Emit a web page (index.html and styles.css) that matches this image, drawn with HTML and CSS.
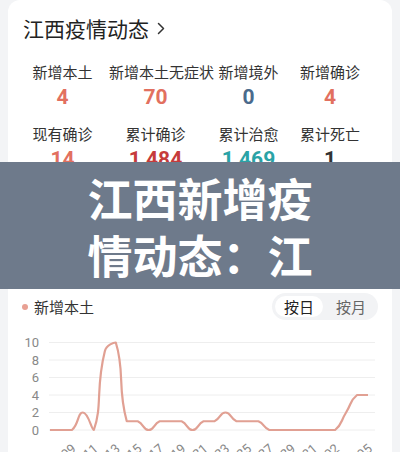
FILE: index.html
```html
<!DOCTYPE html>
<html lang="zh-CN">
<head>
    <meta charset="UTF-8">
    <meta name="viewport" content="width=device-width, initial-scale=1.0">
    <title>江西疫情动态</title>
    <link rel="stylesheet" href="styles.css">
</head>
<body>
    <div class="page">
        <div class="card">
            <div class="card-title">
                江西疫情动态
                <svg class="chevron" width="8" height="13" viewBox="0 0 8 13">
                    <path d="M1.5 1.5 L6.5 6.5 L1.5 11.5" fill="none" stroke="#333" stroke-width="1.5" stroke-linecap="round" stroke-linejoin="round"/>
                </svg>
            </div>

            <div class="stats">
                <div class="stat">
                    <div class="stat-label">新增本土</div>
                    <div class="stat-num coral">4</div>
                </div>
                <div class="stat">
                    <div class="stat-label">新增本土无症状</div>
                    <div class="stat-num coral">70</div>
                </div>
                <div class="stat">
                    <div class="stat-label">新增境外</div>
                    <div class="stat-num slate">0</div>
                </div>
                <div class="stat">
                    <div class="stat-label">新增确诊</div>
                    <div class="stat-num coral">4</div>
                </div>
                <div class="stat">
                    <div class="stat-label">现有确诊</div>
                    <div class="stat-num coral">14</div>
                </div>
                <div class="stat">
                    <div class="stat-label">累计确诊</div>
                    <div class="stat-num red">1,484</div>
                </div>
                <div class="stat">
                    <div class="stat-label">累计治愈</div>
                    <div class="stat-num teal">1,469</div>
                </div>
                <div class="stat">
                    <div class="stat-label">累计死亡</div>
                    <div class="stat-num dark">1</div>
                </div>
            </div>

            <div class="chart-head">
                <div class="legend"><span class="legend-dot"></span>新增本土</div>
                <div class="toggle">
                    <span class="toggle-btn active">按日</span>
                    <span class="toggle-btn">按月</span>
                </div>
            </div>

            <svg class="chart" id="chart" width="384" height="130" viewBox="0 0 384 130"></svg>
        </div>
    </div>

    <div class="banner">
        <div class="banner-text">江西新增疫情动态：江</div>
    </div>

    <script>
        // daily new local cases, starting 12.07
        const data = [0, 0, 0, 2, 0, 9, 10, 1, 1, 0, 1, 1, 1, 0, 1,
                      1, 2, 1, 1, 1, 0, 0, 0, 0, 0, 0, 0, 2, 4, 4];
        const svg = document.getElementById('chart');
        const ns = 'http://www.w3.org/2000/svg';

        const x0 = 42, step = 318 / 29;
        const yZero = 100, unit = 8.75;
        const px = i => x0 + i * step;
        const py = v => yZero - v * unit;

        function add(tag, attrs, text) {
            const el = document.createElementNS(ns, tag);
            for (const k in attrs) el.setAttribute(k, attrs[k]);
            if (text !== undefined) el.textContent = text;
            svg.appendChild(el);
            return el;
        }

        // grid + y labels
        for (let v = 0; v <= 10; v += 2) {
            add('line', { x1: 41, x2: 367, y1: py(v), y2: py(v), stroke: '#eeeeee', 'stroke-width': 1 });
            add('text', { x: 31, y: py(v) + 4.5, 'text-anchor': 'end', class: 'axis' }, v);
        }

        // x labels
        function dateLabel(i) {
            const day = 7 + i;
            if (day <= 31) return '12.' + String(day).padStart(2, '0');
            return '01.' + String(day - 31).padStart(2, '0');
        }
        const ticks = [];
        for (let i = 2; i <= 26; i += 2) ticks.push(i);
        ticks.push(29);
        ticks.forEach(i => {
            add('text', {
                transform: `translate(${px(i) + 5}, 120) rotate(-40)`,
                'text-anchor': 'end',
                class: 'axis'
            }, dateLabel(i));
        });

        // smooth line, control points clamped between neighbours
        const pts = data.map((v, i) => [px(i), py(v)]);
        const smooth = 0.5;
        const clamp = (v, a, b) => Math.min(Math.max(v, Math.min(a, b)), Math.max(a, b));
        const cpIn = [], cpOut = [];
        pts.forEach((p, i) => {
            const prev = pts[i - 1] || p;
            const next = pts[i + 1] || p;
            const vx = next[0] - prev[0], vy = next[1] - prev[1];
            const l0 = Math.hypot(p[0] - prev[0], p[1] - prev[1]);
            const l1 = Math.hypot(next[0] - p[0], next[1] - p[1]);
            const r = l0 + l1 ? l1 / (l0 + l1) : 0;
            cpOut[i] = [clamp(p[0] + vx * smooth * r, p[0], next[0]), clamp(p[1] + vy * smooth * r, p[1], next[1])];
            cpIn[i] = [clamp(p[0] - vx * smooth * (1 - r), p[0], prev[0]), clamp(p[1] - vy * smooth * (1 - r), p[1], prev[1])];
        });

        let path = `M${pts[0][0]} ${pts[0][1]}`;
        for (let i = 0; i < pts.length - 1; i++) {
            path += ` C${cpOut[i][0]} ${cpOut[i][1]} ${cpIn[i + 1][0]} ${cpIn[i + 1][1]} ${pts[i + 1][0]} ${pts[i + 1][1]}`;
        }
        add('path', { d: path, fill: 'none', stroke: '#e1a093', 'stroke-width': 2.2, 'stroke-linejoin': 'round' });
    </script>
</body>
</html>
```

FILE: styles.css
```css
body {
    margin: 0;
    background-color: #f3f4f6;
    font-family: "Noto Sans CJK SC", "Noto Sans", sans-serif;
    color: #333;
}

.page {
    padding: 0 8px;
}

.card {
    background-color: #fff;
    border-radius: 12px;
    padding: 14px 0 20px;
}

.card-title {
    display: flex;
    align-items: center;
    padding-left: 15px;
    font-size: 21px;
    line-height: 28px;
    color: #222;
}

.chevron {
    margin-left: 8px;
    margin-top: 1px;
}

.stats {
    display: grid;
    grid-template-columns: 93px 93px 93px 70px;
    row-gap: 14px;
    margin-top: 20px;
    padding-left: 8px;
}

.stat {
    text-align: center;
    white-space: nowrap;
}

.stat-label {
    font-size: 15px;
    line-height: 20px;
    color: #333;
}

.stat-num {
    margin-top: 2px;
    font-family: Roboto, "Noto Sans", sans-serif;
    font-weight: 700;
    font-size: 21px;
    line-height: 26px;
}

.coral { color: #e2705f; }
.slate { color: #4a6a8c; }
.red   { color: #c63b3b; }
.teal  { color: #2aa3a6; }
.dark  { color: #333; }

.chart-head {
    display: flex;
    justify-content: space-between;
    align-items: center;
    margin-top: 121px;
    padding: 0 14px 0 14px;
}

.legend {
    display: flex;
    align-items: center;
    font-size: 15px;
    color: #333;
}

.legend-dot {
    width: 6px;
    height: 6px;
    border-radius: 50%;
    background-color: #e8a093;
    margin-right: 6px;
}

.toggle {
    display: flex;
    gap: 4px;
    background-color: #f2f3f5;
    border-radius: 14px;
    padding: 3px;
}

.toggle-btn {
    width: 48px;
    text-align: center;
    font-size: 15px;
    line-height: 21px;
    border-radius: 11px;
    color: #666;
}

.toggle-btn.active {
    background-color: #fff;
    color: #222;
}

.chart {
    display: block;
    margin-top: 10px;
}

.axis {
    font-family: Roboto, "Noto Sans", sans-serif;
    font-size: 13px;
    fill: #888;
}

.banner {
    position: absolute;
    top: 162px;
    left: 0;
    width: 100%;
    height: 127px;
    background-color: #6e7a8b;
    display: flex;
    justify-content: center;
}

.banner-text {
    width: 232px;
    padding-top: 7px;
    text-align: center;
    color: #fff;
    font-weight: 700;
    font-size: 45px;
    line-height: 57px;
}
```
